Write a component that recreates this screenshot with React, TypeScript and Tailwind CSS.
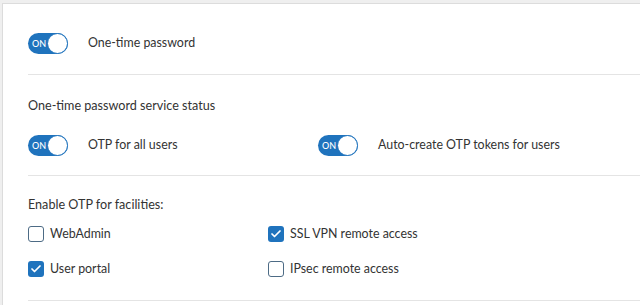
import { Check } from "lucide-react"

function Toggle() {
  return (
    <div className="relative flex h-[21px] w-[40px] shrink-0 items-center rounded-full bg-[#1f73bd]">
      <span className="pl-[4px] text-[9px] font-medium leading-none text-white">ON</span>
      <span className="absolute right-0 top-0 h-[21px] w-[21px] rounded-full border-[1.5px] border-[#1f73bd] bg-white" />
    </div>
  )
}

function Box({ checked }: { checked: boolean }) {
  return checked ? (
    <div className="flex h-[16px] w-[16px] shrink-0 items-center justify-center rounded-[3px] bg-[#1f73bd]">
      <Check className="h-[12px] w-[12px] text-white" strokeWidth={3.5} />
    </div>
  ) : (
    <div className="h-[16px] w-[16px] shrink-0 rounded-[3px] border-[1.5px] border-[#4d6b85] bg-white" />
  )
}

export default function App() {
  return (
    <div className="h-[305px] w-[640px] overflow-hidden bg-[#efefef] pl-[2px] pt-[3px] text-[12.6px] text-[#333]" style={{ fontFamily: "Lato, 'Open Sans', sans-serif" }}>
      <div className="h-full border-l border-t border-[#dcdcdc] bg-white pl-[25px]">
        {/* main switch */}
        <div className="flex h-[71px] items-center gap-[20px] border-b border-[#e4e4e4] pt-[8px]">
          <Toggle />
          <span className="text-[12.4px]">One-time password</span>
        </div>

        {/* service status */}
        <div className="flex h-[101px] flex-col border-b border-[#e4e4e4]">
          <p className="pt-[23px] leading-[16px]">One-time password service status</p>
          <div className="mt-[21px] flex">
            <div className="flex w-[290px] items-center gap-[20px]">
              <Toggle />
              <span className="text-[12.4px]">OTP for all users</span>
            </div>
            <div className="flex items-center gap-[20px]">
              <Toggle />
              <span className="text-[12.4px]">Auto-create OTP tokens for users</span>
            </div>
          </div>
        </div>

        {/* facilities */}
        <div className="flex h-[125px] flex-col border-b border-[#e4e4e4]">
          <p className="pt-[21px] leading-[16px]">Enable OTP for facilities:</p>
          <div className="mt-[12px] grid grid-cols-[240px_1fr] gap-y-[16px]">
            <label className="flex items-center gap-[6px]"><Box checked={false} /><span className="text-[12.4px]">WebAdmin</span></label>
            <label className="flex items-center gap-[6px]"><Box checked /><span className="text-[12.4px]">SSL VPN remote access</span></label>
            <label className="flex items-center gap-[6px]"><Box checked /><span className="text-[12.4px]">User portal</span></label>
            <label className="flex items-center gap-[6px]"><Box checked={false} /><span className="text-[12.4px]">IPsec remote access</span></label>
          </div>
        </div>
      </div>
    </div>
  )
}
